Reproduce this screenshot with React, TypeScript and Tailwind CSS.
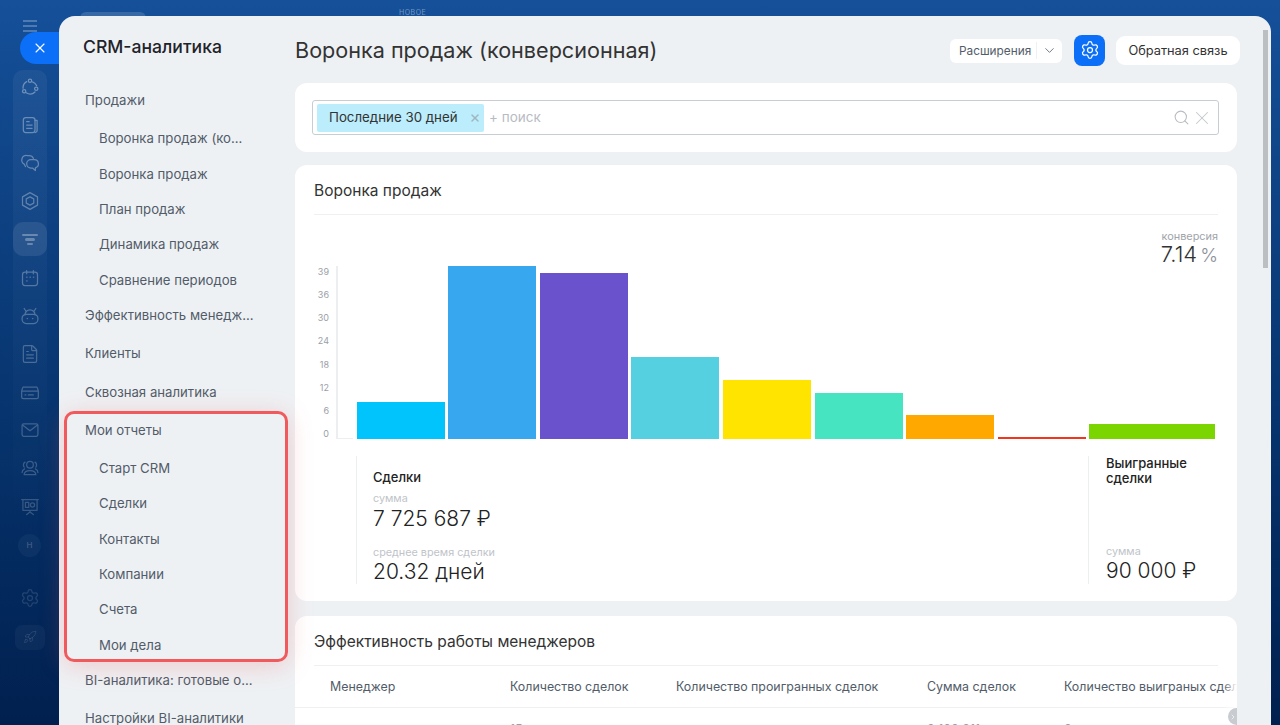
import React from 'react';
import { ChevronDown, ChevronRight, FileText, Rocket, Search, Settings, X } from 'lucide-react';

const font = { fontFamily: 'Inter, "Noto Sans", sans-serif' };

const Glyph = ({ children }: { children: React.ReactNode }) => (
  <svg viewBox="0 0 24 24" className="w-[20px] h-[20px]" fill="none" stroke="currentColor" strokeWidth={1.5} strokeLinecap="round" strokeLinejoin="round">
    {children}
  </svg>
);

const railIcons: React.ReactNode[] = [
  <Glyph>
    <circle cx="12" cy="4.5" r="2" />
    <circle cx="5" cy="17" r="2" />
    <circle cx="19.5" cy="14" r="2" />
    <path d="M8 5.5A8.5 8.5 0 0 0 3.7 13.5M7.5 19A8.5 8.5 0 0 0 18 18M15 5.8A8.5 8.5 0 0 1 20 10.5" />
  </Glyph>,
  <Glyph>
    <rect x="4" y="3" width="14" height="18" rx="3" />
    <path d="M8 8h3M8 12h6.5M8 16h6.5M18 6.5h2.5v12a2.5 2.5 0 0 1-2.5 2.5" />
  </Glyph>,
  <Glyph>
    <path d="M16 6.5C15.3 4.5 13.5 3 11 3H8a5.5 5.5 0 0 0-3 10.3l1.5 3" />
    <path d="M13 8h4a5 5 0 0 1 1.5 9.8V21L15 18h-2a5 5 0 0 1 0-10z" />
  </Glyph>,
  <Glyph>
    <path d="M12 2l9 5v10l-9 5-9-5V7z" />
    <path d="M12 7l4.5 2.5v5L12 17l-4.5-2.5v-5z" />
  </Glyph>,
  null,
  <Glyph>
    <rect x="3" y="5" width="18" height="16" rx="3" />
    <path d="M8 3v4M16 3v4M8 11h.5M12 11h.5M16 11h.5M8 15.5h.5" />
  </Glyph>,
  <Glyph>
    <rect x="2.5" y="10" width="19" height="11" rx="5" />
    <path d="M6 10.5a6 6 0 0 1 12 0M7 6L5 3M17 6l2-3M8.5 15h.5M15 15h.5" />
  </Glyph>,
  <FileText className="w-[20px] h-[20px]" strokeWidth={1.4} />,
  <Glyph>
    <path d="M5 6h14a2 2 0 0 1 2 1.5l1 3.5v7a2 2 0 0 1-2 2H4a2 2 0 0 1-2-2v-7l1-3.5A2 2 0 0 1 5 6z" />
    <path d="M2.5 11h19M6 15.5h1M10 15.5h6" />
  </Glyph>,
  <Glyph>
    <rect x="2.5" y="4.5" width="19" height="15" rx="2" />
    <path d="M3 6l9 7 9-7" />
  </Glyph>,
  <Glyph>
    <circle cx="12" cy="8" r="4" />
    <path d="M5 20c0-3 3-5 7-5s7 2 7 5zM6 5c-2 1-2.500 4-1 6M18 5c2 1 2.500 4 1 6M5.500 13C3.500 14 2.500 15.500 2.500 17.500M18.500 13c2 1 3 2.500 3 4.500" />
  </Glyph>,
  <Glyph>
    <path d="M2 3h20M3.500 3v13h17V3M12 16v2M12 18l-4 3M12 18l4 3" />
    <rect x="6.500" y="6.500" width="4" height="6" />
    <circle cx="15" cy="9.500" r="2.500" />
  </Glyph>,
];

const Rail = () => (
  <div className="w-[59px] shrink-0 flex flex-col items-center pt-[20px] text-white">
    <div className="w-[14px] flex flex-col gap-[3.5px] opacity-25">
      <span className="h-[1.5px] bg-white" />
      <span className="h-[1.5px] bg-white" />
      <span className="h-[1.5px] bg-white" />
    </div>
    <div className="mt-[38px] h-[456px] w-[34px] rounded-[10px] bg-gradient-to-b from-white/[0.05] to-white/0 flex flex-col items-center">
      <div className="-mt-[2px] flex flex-col items-center">
        {railIcons.map((icon, i) =>
          icon ? (
            <div key={i} className="h-[38.2px] w-[34px] flex items-center justify-center" style={{ opacity: 0.36 - i * 0.015 }}>
              {icon}
            </div>
          ) : (
            <div key={i} className="h-[34px] my-[2.1px] w-[34px] rounded-[10px] bg-white/[0.09] flex flex-col items-center justify-center gap-[2px]">
              <span className="w-[16px] h-[2.5px] rounded bg-white/30" />
              <span className="w-[10px] h-[2.5px] rounded bg-white/30" />
              <span className="w-[6px] h-[2.5px] rounded bg-white/30" />
            </div>
          ),
        )}
      </div>
    </div>
    <div className="mt-[8px] w-[23px] h-[23px] rounded-full bg-white/[0.04] flex items-center justify-center text-[8px] font-semibold text-white/20">H</div>
    <Settings className="mt-[31px] w-[20px] h-[20px] text-white/[0.13]" strokeWidth={1.5} />
    <div className="mt-[17px] w-[30px] h-[25px] rounded-[7px] bg-white/[0.04] flex items-center justify-center text-white/[0.12]">
      <Rocket className="w-[14px] h-[14px]" strokeWidth={1.5} />
    </div>
  </div>
);

const menu: [string, boolean][] = [
  ['Продажи', false],
  ['Воронка продаж (ко...', true],
  ['Воронка продаж', true],
  ['План продаж', true],
  ['Динамика продаж', true],
  ['Сравнение периодов', true],
  ['Эффективность менедж...', false],
  ['Клиенты', false],
  ['Сквозная аналитика', false],
  ['Мои отчеты', false],
  ['Старт CRM', true],
  ['Сделки', true],
  ['Контакты', true],
  ['Компании', true],
  ['Счета', true],
  ['Мои дела', true],
  ['BI-аналитика: готовые о...', false],
  ['Настройки BI-аналитики', false],
];

const Sidebar = () => (
  <div className="relative w-[236px] shrink-0 pt-[20px]">
    <div className="pl-[24px] text-[17.6px] leading-[22px] font-medium text-[#1f2329]">CRM-аналитика</div>
    <div className="mt-[32px] flex flex-col text-[13.2px] leading-[20px] text-[#525c69]">
      {menu.map(([label, sub]) => (
        <div key={label} className={`${sub ? 'h-[35.4px] pl-[40px]' : 'h-[38.2px] pl-[26px]'} whitespace-nowrap`}>
          {label}
        </div>
      ))}
    </div>
  </div>
);

const bars = [
  { w: 'w-[88px]', h: 'h-[37px]', c: 'bg-[#00c4fb]' },
  { w: 'w-[88px]', h: 'h-[173px]', c: 'bg-[#37a7f0]' },
  { w: 'w-[88px]', h: 'h-[166px]', c: 'bg-[#6a52cc]' },
  { w: 'w-[88px]', h: 'h-[82px]', c: 'bg-[#55d0e0]' },
  { w: 'w-[88px]', h: 'h-[59px]', c: 'bg-[#ffe400]' },
  { w: 'w-[88px]', h: 'h-[46px]', c: 'bg-[#47e4c2]' },
  { w: 'w-[88px]', h: 'h-[24px]', c: 'bg-[#ffa900]' },
  { w: 'w-[88px]', h: 'h-[2px]', c: 'bg-[#f1361b]' },
  { w: 'w-[126px]', h: 'h-[15px]', c: 'bg-[#7bd500]' },
];

const ticks = ['39', '36', '30', '24', '18', '12', '6', '0'];

const Funnel = () => (
  <div className="mt-[13px] h-[436px] rounded-[12px] bg-white px-[19px]">
    <div className="h-[50px] border-b border-[#eef0f2] text-[15.5px] leading-[52px] text-[#333]">Воронка продаж</div>
    <div className="h-[51px] pt-[15px] flex flex-col items-end">
      <div className="text-[10.9px] leading-[12px] text-[#a0a4aa]">конверсия</div>
      <div className="flex items-baseline text-[22px] leading-[24px] text-[#333] font-light">
        <span>7.14</span>
        <span className="ml-[3px] text-[#8b9199] text-[19px]">%</span>
      </div>
    </div>
    <div className="flex h-[173px]">
      <div className="w-[22px] h-[173px] shrink-0 flex flex-col justify-between items-end pr-[7px] text-[9px] leading-[11px] text-[#9aa0a8]">
        {ticks.map((t) => (
          <span key={t}>{t}</span>
        ))}
      </div>
      <div className="flex-1 flex items-end gap-[3.6px] border-l-2 border-[#eceef0]">
        <div className="w-[15px] h-[1.5px] bg-[#eceef0]" />
        {bars.map((b) => (
          <div key={b.c} className={`${b.w} ${b.h} ${b.c} shrink-0`} />
        ))}
      </div>
    </div>
    <div className="mt-[17px] ml-[42px] h-[128px] flex">
      <div className="flex-1 border-l border-[#eceef0] pl-[16px] pt-[13px]">
        <div className="text-[13px] leading-[16px] font-medium text-[#222]">Сделки</div>
        <div className="mt-[8px] text-[10.8px] leading-[12px] text-[#c0c4c9]">сумма</div>
        <div className="text-[21px] leading-[27px] font-light text-[#222]">7 725 687 ₽</div>
        <div className="mt-[15px] text-[10.8px] leading-[12px] text-[#c0c4c9]">среднее время сделки</div>
        <div className="text-[21px] leading-[26px] font-light text-[#222]">20.32 дней</div>
      </div>
      <div className="w-[130px] border-l border-[#eceef0] pl-[17px] flex flex-col">
        <div className="text-[13px] leading-[15px] font-medium text-[#222]">
          Выигранные
          <br />
          сделки
        </div>
        <div className="mt-auto text-[10.8px] leading-[12px] text-[#c0c4c9]">сумма</div>
        <div className="text-[21px] leading-[26px] font-light text-[#222]">90 000 ₽</div>
      </div>
    </div>
  </div>
);

const Managers = () => (
  <div className="relative mt-[15px] h-[140px] rounded-t-[12px] bg-white overflow-hidden">
    <div className="h-[50px] mx-[19px] border-b border-[#eef0f2] text-[15.5px] leading-[52px] text-[#333]">Эффективность работы менеджеров</div>
    <div className="flex h-[42px] pt-[1px] items-center border-b border-[#eef0f2] text-[12.4px] text-[#525c69] whitespace-nowrap">
      <div className="w-[215px] shrink-0 pl-[35px]">Менеджер</div>
      <div className="w-[166px] shrink-0">Количество сделок</div>
      <div className="w-[251px] shrink-0">Количество проигранных сделок</div>
      <div className="w-[137px] shrink-0">Сумма сделок</div>
      <div className="shrink-0">Количество выиграных сделок</div>
    </div>
    <div className="flex pt-[14px] text-[12.4px] leading-[16px] text-[#9aa0a8] whitespace-nowrap">
      <div className="w-[215px] shrink-0" />
      <div className="w-[417px] shrink-0">15</div>
      <div className="w-[137px] shrink-0">3 100 311</div>
      <div className="shrink-0">3</div>
    </div>
    <div className="absolute right-0 top-[50px] bottom-0 w-[14px] bg-gradient-to-r from-white/0 to-white" />
    <div className="absolute right-0 top-[92px] w-[9px] h-[17px] rounded-l-full bg-[#c8ccd0] flex items-center justify-center text-white">
      <ChevronRight className="w-[8px] h-[8px]" strokeWidth={2} />
    </div>
  </div>
);

export default function App() {
  return (
    <div className="relative h-[725px] w-[1280px] overflow-hidden bg-gradient-to-b from-[#155099] to-[#01204f] flex" style={font}>
      <Rail />
      <div className="absolute left-[80px] top-[12px] w-[66px] h-[6px] rounded-t-[8px] bg-white/15" />
      <div className="absolute left-[399px] top-[9px] text-[7px] leading-[8px] tracking-[0.5px] text-white/40">НОВОЕ</div>
      <div className="relative mt-[16px] w-[1212px] h-[709px] rounded-t-[16px] bg-[#eef1f4] flex overflow-hidden">
        <Sidebar />
        <div className="w-[942px] shrink-0">
          <div className="flex items-center h-[67px] pt-[1px]">
            <div className="text-[21.6px] leading-[28px] text-[#333]">Воронка продаж (конверсионная)</div>
            <div className="ml-auto mt-[1px] flex items-center h-[24px] w-[112px] rounded-[6px] bg-white text-[11.8px] leading-[16px] text-[#525c69]">
              <span className="pl-[9px] pt-[1px] w-[87px] border-r border-[#eef0f2] whitespace-nowrap">Расширения</span>
              <ChevronDown className="ml-[5px] w-[15px] h-[15px]" strokeWidth={1.3} />
            </div>
            <div className="ml-[12px] w-[31px] h-[31px] rounded-[8px] bg-[#0b6ff7] flex items-center justify-center text-white">
              <Settings className="w-[20px] h-[20px]" strokeWidth={1.5} />
            </div>
            <div className="ml-[11px] mr-[-3px] w-[124px] h-[29px] rounded-[9px] bg-white text-[12.8px] leading-[29px] text-center text-[#333]">Обратная связь</div>
          </div>
          <div className="h-[69px] rounded-[12px] bg-white pl-[17px] pr-[18px] flex items-center">
            <div className="w-full h-[35px] rounded-[3px] border border-[#c6cdd3] flex items-center pl-[4px] pr-[5px]">
              <div className="h-[28px] w-[167px] rounded-[2px] bg-[#bcedfc] flex items-center pl-[12px] text-[13.3px] text-[#333] whitespace-nowrap">
                <span>Последние 30 дней</span>
                <X className="ml-auto mr-[3px] w-[12px] h-[12px] text-[#9fb6c0]" strokeWidth={3} />
              </div>
              <span className="ml-[5px] text-[13.5px] text-[#b8bcc2]">+ поиск</span>
              <Search className="ml-auto w-[17px] h-[17px] text-[#b9bdc2]" strokeWidth={1.5} />
              <X className="ml-[1px] w-[22px] h-[22px] text-[#c4c8cc]" strokeWidth={1.1} />
            </div>
          </div>
          <Funnel />
          <Managers />
        </div>
        <div className="ml-[26px] mt-[14px] w-[5px] h-[238px] bg-[#bcbfc2]" />
      </div>
      <div className="absolute left-[20px] top-[32px] w-[39px] h-[32px] rounded-l-full bg-[#0b6ff7] flex items-center justify-center text-white">
        <X className="w-[16px] h-[16px]" strokeWidth={1.6} />
      </div>
      <div className="absolute left-[64px] top-[411px] w-[224px] h-[251px] rounded-[10px] border-[3.5px] border-[#f05a5c] shadow-[0_4px_24px_rgba(240,90,92,0.25)]" />
    </div>
  );
}
